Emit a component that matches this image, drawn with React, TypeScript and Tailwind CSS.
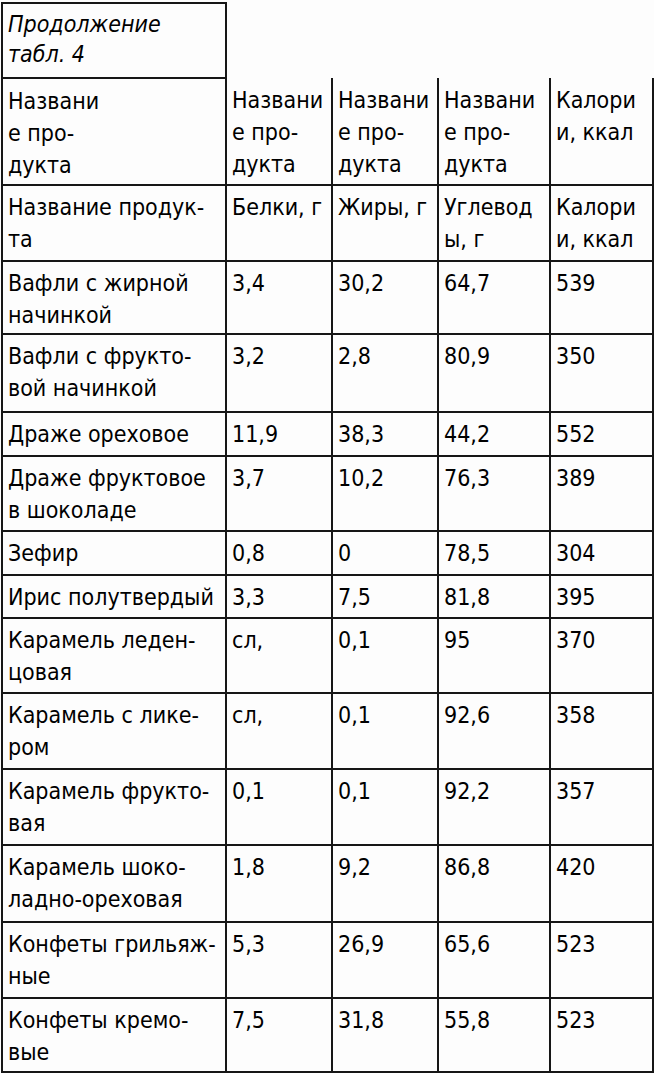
import React from 'react';

type Row = { name: React.ReactNode; b: string; f: string; u: string; k: string; h: string };

const rows: Row[] = [
  { name: <>Вафли с жирной<br />начинкой</>, b: '3,4', f: '30,2', u: '64,7', k: '539', h: 'h-[73px]' },
  { name: <>Вафли с фрукто-<br />вой начинкой</>, b: '3,2', f: '2,8', u: '80,9', k: '350', h: 'h-[78px]' },
  { name: <>Драже ореховое</>, b: '11,9', f: '38,3', u: '44,2', k: '552', h: 'h-[44px]' },
  { name: <>Драже фруктовое<br />в шоколаде</>, b: '3,7', f: '10,2', u: '76,3', k: '389', h: 'h-[75px]' },
  { name: <>Зефир</>, b: '0,8', f: '0', u: '78,5', k: '304', h: 'h-[44px]' },
  { name: <>Ирис полутвердый</>, b: '3,3', f: '7,5', u: '81,8', k: '395', h: 'h-[43px]' },
  { name: <>Карамель леден-<br />цовая</>, b: 'сл,', f: '0,1', u: '95', k: '370', h: 'h-[75px]' },
  { name: <>Карамель с лике-<br />ром</>, b: 'сл,', f: '0,1', u: '92,6', k: '358', h: 'h-[76px]' },
  { name: <>Карамель фрукто-<br />вая</>, b: '0,1', f: '0,1', u: '92,2', k: '357', h: 'h-[76px]' },
  { name: <>Карамель шоко-<br />ладно-ореховая</>, b: '1,8', f: '9,2', u: '86,8', k: '420', h: 'h-[77px]' },
  { name: <>Конфеты грильяж-<br />ные</>, b: '5,3', f: '26,9', u: '65,6', k: '523', h: 'h-[76px]' },
  { name: <>Конфеты кремо-<br />вые</>, b: '7,5', f: '31,8', u: '55,8', k: '523', h: 'h-[74px]' },
];

const cell = 'border-2 border-[#161616] align-top pl-[5px] pr-0 pt-[5px] pb-0 whitespace-nowrap';

export default function App() {
  return (
    <div className="min-h-screen bg-[#fdfdfd] pt-[2px] pl-[1px] overflow-hidden">
      <table
        className="table-fixed border-collapse w-[651px] text-black text-[23px] leading-[32px]"
        style={{ fontFamily: '"DejaVu Sans Condensed", "DejaVu Sans", sans-serif' }}
      >
        <colgroup>
          <col className="w-[224px]" />
          <col className="w-[106px]" />
          <col className="w-[106px]" />
          <col className="w-[112px]" />
          <col className="w-[103px]" />
        </colgroup>
        <tbody>
          <tr className="h-[75px]">
            <td className={`${cell} italic pt-[4px] leading-[30px]`}>
              Продолжение<br />табл. 4
            </td>
            <td className="border-l-2 border-[#161616]" colSpan={4}></td>
          </tr>
          <tr className="h-[107px]">
            <td className={`${cell} pt-[6px]`}>Названи<br />е про-<br />дукта</td>
            <td className={`${cell} pt-[6px] border-t-0`}>Названи<br />е про-<br />дукта</td>
            <td className={`${cell} pt-[6px] border-t-0`}>Названи<br />е про-<br />дукта</td>
            <td className={`${cell} pt-[6px] border-t-0`}>Названи<br />е про-<br />дукта</td>
            <td className={`${cell} pt-[6px] border-t-0`}>Калори<br />и, ккал</td>
          </tr>
          <tr className="h-[76px]">
            <td className={cell}>Название продук-<br />та</td>
            <td className={cell}>Белки, г</td>
            <td className={cell}>Жиры, г</td>
            <td className={cell}>Углевод<br />ы, г</td>
            <td className={cell}>Калори<br />и, ккал</td>
          </tr>
          {rows.map((r, i) => (
            <tr key={i} className={r.h}>
              <td className={cell}>{r.name}</td>
              <td className={cell}>{r.b}</td>
              <td className={cell}>{r.f}</td>
              <td className={cell}>{r.u}</td>
              <td className={cell}>{r.k}</td>
            </tr>
          ))}
        </tbody>
      </table>
    </div>
  );
}
